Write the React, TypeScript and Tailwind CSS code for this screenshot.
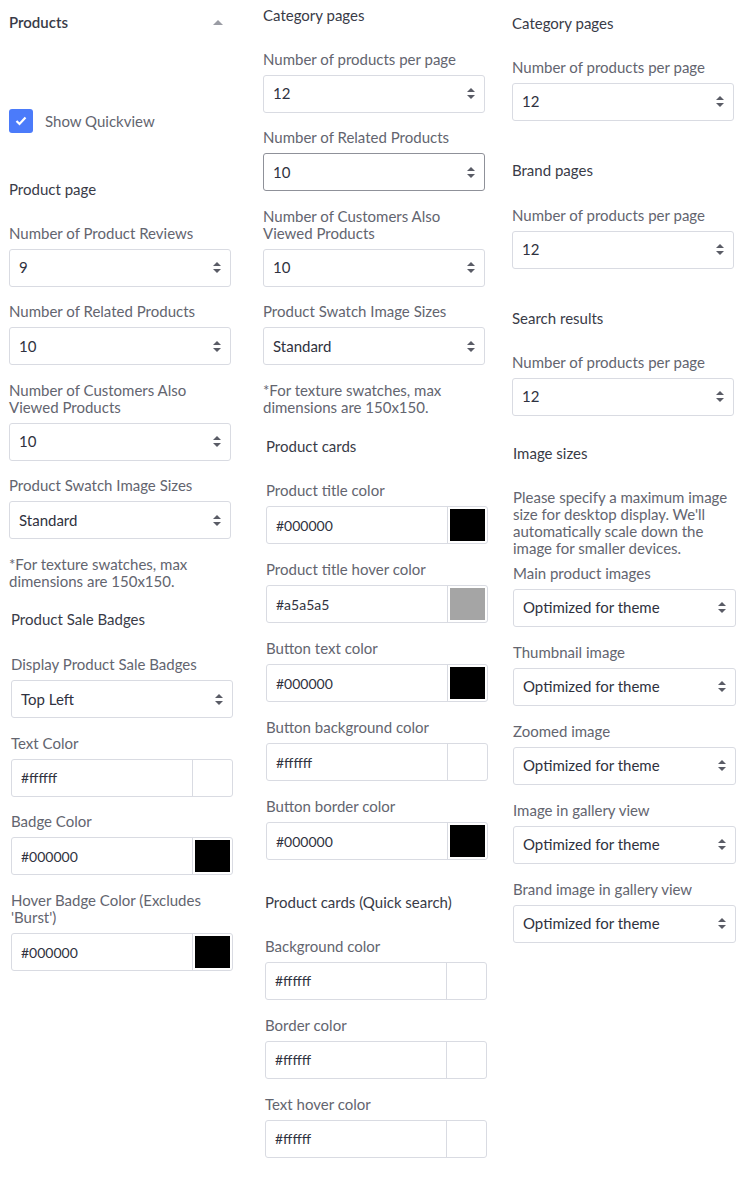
import React from "react";

type FieldProps = {
  label: React.ReactNode;
  value: string;
  focused?: boolean;
  className?: string;
};

function Arrows() {
  return (
    <svg width="8" height="11" viewBox="0 0 8 11" className="shrink-0">
      <path d="M4 0 L8 4 H0 Z" fill="#5a5c66" />
      <path d="M0 7 H8 L4 11 Z" fill="#5a5c66" />
    </svg>
  );
}

function Label({ children }: { children: React.ReactNode }) {
  return <div className="text-[15px] leading-[17px] text-[#63656f] mb-[7px]">{children}</div>;
}

function SelectField({ label, value, focused, className = "mt-[16.5px]" }: FieldProps) {
  return (
    <div className={className}>
      <Label>{label}</Label>
      <div
        className={`h-[38px] rounded-[3px] border bg-white flex items-center justify-between pl-[9px] pr-[9px] text-[15px] text-[#2f3240] ${
          focused ? "border-[#8f9199]" : "border-[#d9dbe2]"
        }`}
      >
        <span>{value}</span>
        <Arrows />
      </div>
    </div>
  );
}

function ColorField({ label, value, className = "mt-[16.5px]" }: FieldProps) {
  const swatch = value === "#ffffff" ? "bg-white" : value === "#a5a5a5" ? "bg-[#a5a5a5]" : "bg-black";
  return (
    <div className={className}>
      <Label>{label}</Label>
      <div className="h-[38px] rounded-[3px] border border-[#d9dbe2] bg-white flex">
        <div className="flex-1 flex items-center pl-[9px] text-[14px] text-[#2f3240]">{value}</div>
        <div className="w-[40px] border-l border-[#d9dbe2] p-[2px]">
          <div className={`w-full h-full ${swatch}`} />
        </div>
      </div>
    </div>
  );
}

function Heading({ children, className = "" }: { children: React.ReactNode; className?: string }) {
  return <div className={`text-[15px] leading-[17px] text-[#393b47] ${className}`}>{children}</div>;
}

function Note({ children, className = "" }: { children: React.ReactNode; className?: string }) {
  return <div className={`text-[15px] leading-[17px] text-[#63656f] ${className}`}>{children}</div>;
}

export default function App() {
  return (
    <div className="w-[750px] h-[1200px] bg-white flex items-start font-['Lato',sans-serif] overflow-hidden">
      {/* column 1 */}
      <div className="ml-[9px] w-[222px] shrink-0">
        <div className="mt-[14px] flex items-center justify-between pr-[8px]">
          <span className="text-[15px] leading-[17px] font-semibold text-[#393b47]">Products</span>
          <svg width="10" height="5" viewBox="0 0 10 5">
            <path d="M0 5 L5 0 L10 5 Z" fill="#9a9ca4" />
          </svg>
        </div>

        <div className="mt-[78px] flex items-center gap-3 h-[24px]">
          <div className="w-[24px] h-[24px] rounded-[3px] bg-[#4b7bfa] flex items-center justify-center">
            <svg width="12" height="10" viewBox="0 0 12 10">
              <path d="M1.5 5 L4.5 8 L10.5 1.5" stroke="white" strokeWidth="2.2" fill="none" />
            </svg>
          </div>
          <span className="text-[15px] text-[#63656f]">Show Quickview</span>
        </div>

        <Heading className="mt-[47.5px]">Product page</Heading>
        <SelectField className="mt-[27px]" label="Number of Product Reviews" value="9" />
        <SelectField label="Number of Related Products" value="10" />
        <SelectField
          label={
            <>
              Number of Customers Also
              <br />
              Viewed Products
            </>
          }
          value="10"
        />
        <SelectField label="Product Swatch Image Sizes" value="Standard" />
        <Note className="mt-[17px]">
          *For texture swatches, max
          <br />
          dimensions are 150x150.
        </Note>

        <div className="ml-[2px] w-[222px]">
          <Heading className="mt-[21px]">Product Sale Badges</Heading>
          <SelectField className="mt-[28px]" label="Display Product Sale Badges" value="Top Left" />
          <ColorField label="Text Color" value="#ffffff" />
          <ColorField label="Badge Color" value="#000000" />
          <ColorField
            className="mt-[17px]"
            label={
              <>
                Hover Badge Color (Excludes
                <br />
                'Burst')
              </>
            }
            value="#000000"
          />
        </div>
      </div>

      {/* column 2 */}
      <div className="ml-[32px] w-[222px] shrink-0">
        <Heading className="mt-[6.5px]">Category pages</Heading>
        <SelectField className="mt-[27px]" label="Number of products per page" value="12" />
        <SelectField label="Number of Related Products" value="10" focused />
        <SelectField
          label={
            <>
              Number of Customers Also
              <br />
              Viewed Products
            </>
          }
          value="10"
        />
        <SelectField label="Product Swatch Image Sizes" value="Standard" />
        <Note className="mt-[17px]">
          *For texture swatches, max
          <br />
          dimensions are 150x150.
        </Note>

        <div className="ml-[3px] w-[222px]">
          <Heading className="mt-[22px]">Product cards</Heading>
          <ColorField className="mt-[27px]" label="Product title color" value="#000000" />
          <ColorField className="mt-[17px]" label="Product title hover color" value="#a5a5a5" />
          <ColorField className="mt-[17px]" label="Button text color" value="#000000" />
          <ColorField className="mt-[17px]" label="Button background color" value="#ffffff" />
          <ColorField className="mt-[17px]" label="Button border color" value="#000000" />
        </div>

        <div className="ml-[2px] w-[222px]">
          <Heading className="mt-[33.5px]">Product cards (Quick search)</Heading>
          <ColorField className="mt-[27px]" label="Background color" value="#ffffff" />
          <ColorField className="mt-[17px]" label="Border color" value="#ffffff" />
          <ColorField className="mt-[17px]" label="Text hover color" value="#ffffff" />
        </div>
      </div>

      {/* column 3 */}
      <div className="ml-[27px] w-[222px] shrink-0">
        <Heading className="mt-[14.5px]">Category pages</Heading>
        <SelectField className="mt-[27px]" label="Number of products per page" value="12" />

        <Heading className="mt-[41px]">Brand pages</Heading>
        <SelectField className="mt-[28px]" label="Number of products per page" value="12" />

        <Heading className="mt-[41px]">Search results</Heading>
        <SelectField className="mt-[27px]" label="Number of products per page" value="12" />

        <div className="ml-[1px] w-[223px]">
          <Heading className="mt-[29px]">Image sizes</Heading>
          <Note className="mt-[27px]">
            Please specify a maximum image size for desktop display. We'll automatically scale down the
            image for smaller devices.
          </Note>
          <SelectField className="mt-[8px]" label="Main product images" value="Optimized for theme" />
          <SelectField className="mt-[17px]" label="Thumbnail image" value="Optimized for theme" />
          <SelectField className="mt-[17px]" label="Zoomed image" value="Optimized for theme" />
          <SelectField className="mt-[17px]" label="Image in gallery view" value="Optimized for theme" />
          <SelectField className="mt-[17px]" label="Brand image in gallery view" value="Optimized for theme" />
        </div>
      </div>
    </div>
  );
}
